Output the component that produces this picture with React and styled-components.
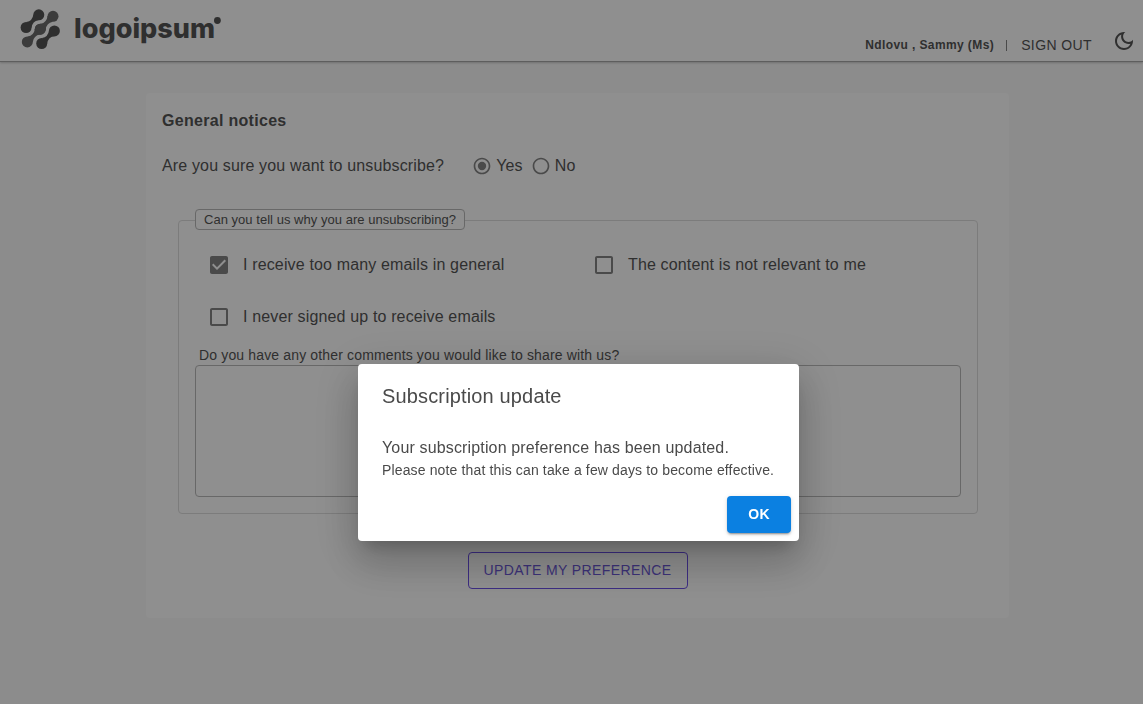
import React from "react";
import styled, { createGlobalStyle, css } from "styled-components";

const GlobalStyle = createGlobalStyle`
  *, *::before, *::after { box-sizing: border-box; }
  body {
    margin: 0;
    background: #fafafa;
    color: #555;
    font-family: "Liberation Sans", Arial, sans-serif;
    font-size: 16px;
    line-height: 24px;
    overflow: hidden;
  }
`;

const Page = styled.div`
  min-height: 704px;
`;

const Header = styled.header`
  display: flex;
  justify-content: space-between;
  height: 62px;
  padding: 0 7px 0 20px;
  background: #fff;
  border-bottom: 1px solid #a8a8a8;
  box-shadow: 0 1px 2px rgba(0, 0, 0, 0.2);
`;

const LogoArt = styled.svg`
  display: block;
  width: 204px;
  height: 56px;
`;

const Account = styled.div`
  display: flex;
  align-items: center;
  height: 28px;
  margin-top: 31px;
`;

const UserName = styled.span`
  font-size: 12px;
  font-weight: 700;
  letter-spacing: 0.4px;
`;

const Divider = styled.span`
  width: 1px;
  height: 11px;
  margin: 0 14px 0 12px;
  background: #858585;
`;

const SignOut = styled.a`
  font-size: 14px;
  letter-spacing: 0.4px;
`;

const ThemeToggle = styled.button`
  display: flex;
  width: 24px;
  height: 24px;
  margin: -8px 0 0 20px;
  padding: 0;
  border: 0;
  background: none;
  color: #555;
`;

const Card = styled.main`
  width: 863px;
  height: 525px;
  margin: 31px 0 0 146px;
  padding: 16px 31px 0 16px;
  background: #fff;
  border-radius: 4px;
`;

const Title = styled.h1`
  margin: 0;
  font-size: 16px;
  line-height: 24px;
  letter-spacing: 0.3px;
`;

const Question = styled.div`
  display: flex;
  align-items: center;
  height: 24px;
  margin-top: 21px;
  letter-spacing: 0.15px;
`;

const Choice = styled.label`
  display: flex;
  align-items: center;
  gap: 4px;
  margin-left: ${(p) => p.$gap}px;
`;

const ControlIcon = styled.svg`
  display: block;
  flex: none;
  fill: #858585;
`;

const Reasons = styled.fieldset`
  height: 304px;
  min-width: 0;
  margin: 32px 0 0 16px;
  padding: 0 16px;
  border: 1px solid #dedede;
  border-radius: 4px;
`;

const Legend = styled.legend`
  height: 21px;
  padding: 0 8px;
  border: 1px solid #bababa;
  border-radius: 4px;
  background: #fff;
  font-size: 13px;
  line-height: 19px;
  letter-spacing: 0.03px;
  transform: translateY(-1px);
`;

const Options = styled.div`
  display: grid;
  grid-template-columns: 385px 1fr;
  grid-auto-rows: 52px;
  margin-top: 8px;
  padding-left: 12px;
`;

const Option = styled.label`
  display: flex;
  align-items: center;
  gap: 12px;
  letter-spacing: 0.15px;
`;

const CommentLabel = styled.label`
  display: block;
  margin: 2px 0 0 4px;
  font-size: 14px;
  line-height: 20px;
  letter-spacing: 0.15px;
`;

const CommentBox = styled.textarea`
  display: block;
  width: 766px;
  height: 132px;
  border: 1px solid #bababa;
  border-radius: 4px;
  background: transparent;
  resize: none;
`;

const buttonVariants = {
  outlined: css`
    width: 220px;
    border: 1px solid #6c50e8;
    background: transparent;
    color: #6c59d6;
    letter-spacing: 0.4px;
  `,
  contained: css`
    width: 64px;
    border: 0;
    background: #0b80e1;
    color: #fff;
    font-weight: 700;
    letter-spacing: 0.2px;
    box-shadow: 0 3px 1px -2px rgba(0, 0, 0, 0.2), 0 2px 2px rgba(0, 0, 0, 0.14),
      0 1px 5px rgba(0, 0, 0, 0.12);
  `,
};

const Button = styled.button`
  height: 37px;
  padding: 0 0 2px;
  border-radius: 4px;
  font-family: inherit;
  font-size: 14px;
  white-space: nowrap;
  ${(p) => buttonVariants[p.$variant]}
`;

const FormActions = styled.div`
  display: flex;
  justify-content: center;
  margin: 38px -15px 0 0;
`;

const Backdrop = styled.div`
  position: fixed;
  inset: 0;
  display: flex;
  align-items: flex-start;
  padding: 364px 0 0 358px;
  background: rgba(0, 0, 0, 0.44);
`;

const Dialog = styled.section`
  width: 441px;
  height: 177px;
  padding: 16px 8px 8px 24px;
  background: #fff;
  color: #4a4a4a;
  border-radius: 4px;
  box-shadow: 0 11px 15px -7px rgba(0, 0, 0, 0.2), 0 24px 38px 3px rgba(0, 0, 0, 0.14),
    0 9px 46px 8px rgba(0, 0, 0, 0.12);
`;

const DialogTitle = styled.h2`
  margin: 0 0 24px;
  font-size: 20px;
  font-weight: 400;
  line-height: 32px;
  letter-spacing: 0.15px;
`;

const Message = styled.p`
  margin: 0;
  line-height: 24px;
  letter-spacing: 0.15px;
`;

const Note = styled.p`
  margin: 0;
  font-size: 14px;
  line-height: 20px;
  letter-spacing: 0.14px;
`;

const DialogActions = styled.div`
  display: flex;
  justify-content: flex-end;
  margin-top: 16px;
`;

// A pair of balls joined by a narrow neck; b lies up and to the right of a.
function Link({ a, b }) {
  const [ax, ay] = a;
  const [bx, by] = b;
  const mid = `${(ax + bx) / 2} ${(ay + by) / 2}`;
  const near = 0.3;
  const far = 5.4;
  return (
    <>
      <circle cx={ax} cy={ay} r="5.5" />
      <circle cx={bx} cy={by} r="5.5" />
      <path
        d={`M${ax + far} ${ay + near}Q${mid} ${bx - near} ${by + far}L${bx - far} ${by - near}Q${mid} ${ax + near} ${ay - far}Z`}
      />
    </>
  );
}

function Logo() {
  return (
    <LogoArt viewBox="20 0 204 56" role="img" aria-label="logoipsum">
      <g fill="#6b6b6b">
        <Link a={[40.3, 29.2]} b={[53, 16.3]} />
        <Link a={[27.3, 41.9]} b={[40.3, 29.2]} />
      </g>
      <g fill="#555">
        <Link a={[26.1, 27.5]} b={[38.8, 14.8]} />
        <Link a={[41.7, 43.5]} b={[54.4, 30.9]} />
      </g>
      <text
        x="74"
        y="38.3"
        fill="#555"
        fontFamily="Inter, sans-serif"
        fontWeight="800"
        fontSize="27"
        textLength="141"
        lengthAdjust="spacingAndGlyphs"
      >
        logoipsum
      </text>
      <circle cx="217.4" cy="20.5" r="3.4" fill="#555" />
    </LogoArt>
  );
}

function Radio({ checked }) {
  return (
    <ControlIcon width="20" height="20" viewBox="0 0 24 24">
      <path d="M12 2C6.48 2 2 6.48 2 12s4.48 10 10 10 10-4.48 10-10S17.52 2 12 2zm0 18c-4.42 0-8-3.58-8-8s3.58-8 8-8 8 3.58 8 8-3.58 8-8 8z" />
      {checked && <circle cx="12" cy="12" r="5" />}
    </ControlIcon>
  );
}

function Checkbox({ checked }) {
  return (
    <ControlIcon width="24" height="24" viewBox="0 0 24 24">
      {checked ? (
        <path d="M19 3H5c-1.11 0-2 .9-2 2v14c0 1.1.89 2 2 2h14c1.11 0 2-.9 2-2V5c0-1.1-.89-2-2-2zm-9 14l-5-5 1.41-1.41L10 14.17l7.59-7.59L19 8l-9 9z" />
      ) : (
        <path d="M19 5v14H5V5h14m0-2H5c-1.1 0-2 .9-2 2v14c0 1.1.9 2 2 2h14c1.1 0 2-.9 2-2V5c0-1.1-.9-2-2-2z" />
      )}
    </ControlIcon>
  );
}

const reasons = [
  { text: "I receive too many emails in general", checked: true },
  { text: "The content is not relevant to me", checked: false },
  { text: "I never signed up to receive emails", checked: false },
];

export default function App() {
  return (
    <Page>
      <GlobalStyle />
      <Header>
        <Logo />
        <Account>
          <UserName>Ndlovu , Sammy (Ms)</UserName>
          <Divider />
          <SignOut>SIGN OUT</SignOut>
          <ThemeToggle aria-label="Dark mode">
            <svg width="24" height="24" viewBox="0 0 24 24" fill="currentColor">
              <path d="M9.37 5.51c-.18.64-.27 1.31-.27 1.99 0 4.08 3.32 7.4 7.4 7.4.68 0 1.35-.09 1.99-.27C17.45 17.19 14.93 19 12 19c-3.86 0-7-3.14-7-7 0-2.93 1.81-5.45 4.37-6.49zM12 3c-4.97 0-9 4.03-9 9s4.03 9 9 9 9-4.03 9-9c0-.46-.04-.92-.1-1.36-.98 1.37-2.58 2.26-4.4 2.26-2.98 0-5.4-2.42-5.4-5.4 0-1.81.89-3.42 2.26-4.4-.44-.06-.9-.1-1.36-.1z" />
            </svg>
          </ThemeToggle>
        </Account>
      </Header>
      <Card>
        <Title>General notices</Title>
        <Question>
          <span>Are you sure you want to unsubscribe?</span>
          <Choice $gap={28}>
            <Radio checked />
            Yes
          </Choice>
          <Choice $gap={8}>
            <Radio />
            No
          </Choice>
        </Question>
        <Reasons>
          <Legend>Can you tell us why you are unsubscribing?</Legend>
          <Options>
            {reasons.map((r) => (
              <Option key={r.text}>
                <Checkbox checked={r.checked} />
                {r.text}
              </Option>
            ))}
          </Options>
          <CommentLabel htmlFor="comments">
            Do you have any other comments you would like to share with us?
          </CommentLabel>
          <CommentBox id="comments" />
        </Reasons>
        <FormActions>
          <Button $variant="outlined">UPDATE MY PREFERENCE</Button>
        </FormActions>
      </Card>
      <Backdrop>
        <Dialog role="dialog" aria-label="Subscription update">
          <DialogTitle>Subscription update</DialogTitle>
          <Message>Your subscription preference has been updated.</Message>
          <Note>Please note that this can take a few days to become effective.</Note>
          <DialogActions>
            <Button $variant="contained">OK</Button>
          </DialogActions>
        </Dialog>
      </Backdrop>
    </Page>
  );
}
